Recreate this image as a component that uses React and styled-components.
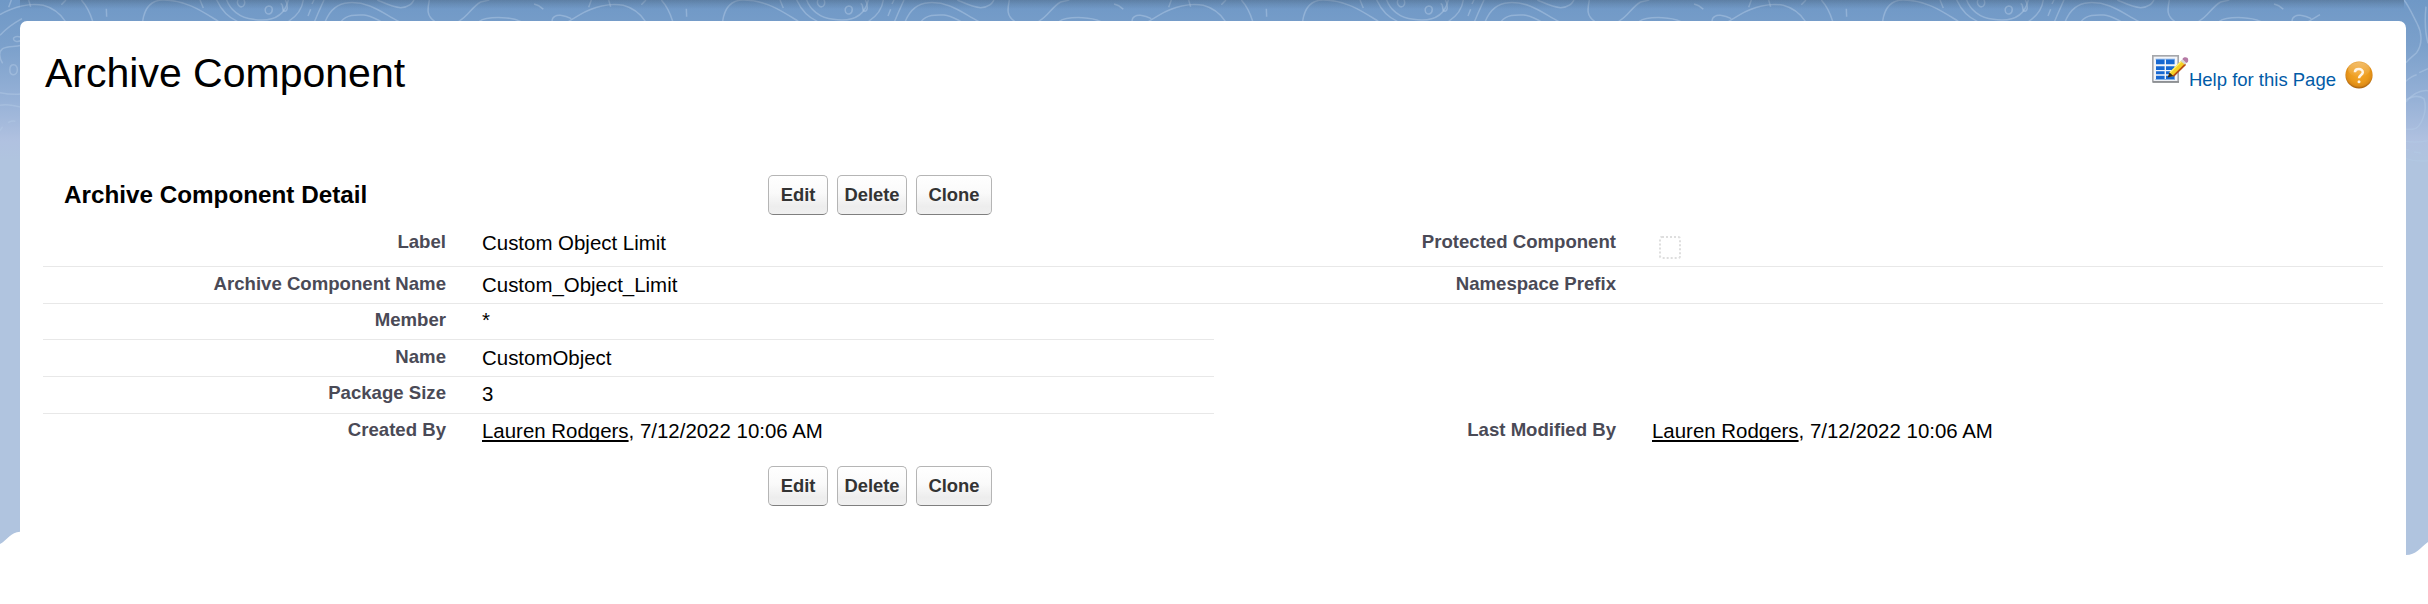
import React from 'react';
import styled, { createGlobalStyle } from 'styled-components';

const GlobalStyle = createGlobalStyle`
  * { box-sizing: border-box; }
  body { margin: 0; background: #fff; font-family: "Liberation Sans", Arial, sans-serif; color: #000; }
`;

const Page = styled.div`
  position: relative;
  height: 604px;
  overflow: hidden;
  padding: 21px 22px 0 20px;
`;

const Backdrop = styled.svg`
  position: absolute;
  inset: 0;
  display: block;
`;

const Card = styled.main`
  position: relative;
  height: 583px;
  background: #fff;
  border-radius: 7px 7px 0 0;
  padding: 0 23px;
`;

const Header = styled.header`
  display: flex;
  justify-content: space-between;
  align-items: flex-start;
  height: 154px;
  padding: 27px 10px 0 2px;
`;

const Title = styled.h1`
  margin: 0;
  font-size: 41px;
  font-weight: 400;
  line-height: 50px;
  white-space: nowrap;
`;

const HelpLinks = styled.div`
  display: flex;
  align-items: flex-start;
  padding-top: 7px;
`;

const HelpLink = styled.a`
  display: flex;
  color: #015ba7;
  font-size: 18.5px;
  line-height: 24px;
  margin: 13px 9px 0 0;
  white-space: nowrap;
`;

const HelpBall = styled.svg`
  margin-top: 6px;
`;

const ActionBar = styled.div`
  display: flex;
  align-items: flex-start;
  height: ${(p) => p.$height}px;
  padding-top: ${(p) => p.$top || 0}px;
`;

const SectionTitle = styled.h2`
  width: 725px;
  margin: 0;
  padding-left: 21px;
  font-size: 24.25px;
  line-height: 40px;
  white-space: nowrap;
`;

const Buttons = styled.div`
  display: flex;
  gap: 9px;
`;

const Button = styled.button`
  width: ${(p) => p.$width}px;
  height: 40px;
  padding: 0 0 1px;
  border: 1px solid #b5b5b5;
  border-bottom-color: #7f7f7f;
  border-radius: 5px;
  background: linear-gradient(#fff 0%, #fafafa 45%, #ededed 80%, #f0f0f0 100%);
  color: #333;
  font: bold 18.4px/24px "Liberation Sans", Arial, sans-serif;
`;

const Details = styled.div`
  width: 2340px;
`;

const Row = styled.div`
  display: grid;
  grid-template-columns: 403px 768px 402px 1fr;
  width: ${(p) => (p.$half ? 1171 : 2340)}px;
  height: ${(p) => p.$height}px;
  border-bottom: 1px solid ${(p) => (p.$last ? 'transparent' : '#e8e8e8')};
`;

const Label = styled.div`
  padding-top: ${(p) => 5 + (p.$shift || 0)}px;
  text-align: right;
  color: #4a4a56;
  font-size: 18.6px;
  font-weight: 700;
  line-height: 24px;
`;

const Value = styled.div`
  padding: ${(p) => 6 + (p.$shift || 0)}px 0 0 36px;
  font-size: 20.44px;
  line-height: 24px;
  white-space: nowrap;
`;

const UserLink = styled.a`
  text-decoration: underline;
  text-decoration-thickness: 2px;
  text-underline-offset: 2px;
  text-decoration-skip-ink: none;
`;

const Checkbox = styled.span`
  display: block;
  width: 22px;
  height: 23px;
  margin: 5px 0 0 7px;
  border: 2px dotted #dedede;
  border-radius: 3px;
`;

const contours = [
  'M0 44 C40 20 90 8 130 16 C160 24 184 46 196 64',
  'M26 22 L34 0 M86 0 L92 20',
  'M184 14 L198 0 M244 0 C262 20 272 44 278 64',
  'M319 26 L320 50',
  'M428 64 C432 36 444 0 490 0 C560 0 610 36 655 64',
  'M600 0 L610 24',
  'M650 0 C664 30 684 52 712 64 M680 0 C690 28 718 54 760 58 C800 64 850 62 865 0',
  'M714 0 C708 12 720 26 730 18 C736 12 734 4 732 0',
  'M806 18 C790 22 794 44 808 42 C820 38 820 18 806 18 Z',
  'M842 10 C854 16 842 34 856 34 C864 30 864 14 856 0',
  'M910 0 C906 30 888 50 866 64',
  'M932 28 L924 48 M942 0 L936 12',
  'M944 64 C956 34 966 14 972 0',
  'M976 64 C988 34 1010 10 1046 8 C1108 4 1146 38 1196 64',
  'M1024 64 C1040 44 1066 44 1092 45 C1112 47 1126 56 1142 64',
  'M1132 0 C1160 12 1180 22 1202 23 C1228 22 1236 10 1242 0',
  'M1288 0 C1282 30 1280 48 1304 64',
  'M1376 64 C1404 50 1414 22 1442 6 L1468 0',
  'M1438 64 C1454 52 1480 52 1508 53 C1532 54 1548 58 1562 64',
  'M1602 12 C1614 14 1624 22 1630 28',
  'M1656 64 C1656 50 1670 44 1682 46 C1696 48 1706 52 1714 56',
  'M1706 64 L1740 44',
];

const leftContours = [
  'M0 106 C24 80 44 68 66 56',
  'M64 112 C40 104 34 120 48 124 C56 126 62 122 66 120',
  'M8 190 C-4 170 -2 154 8 146 C26 136 42 142 64 136',
  'M41 194 C26 194 26 222 39 224 C56 226 56 194 41 194 Z',
  'M0 278 C20 282 40 284 64 282',
  'M0 316 C18 312 42 316 64 322',
  'M0 392 L8 380 M24 368 C32 364 38 360 46 364',
];

const rightContours = [
  'M7212 0 C7228 20 7240 50 7252 72 C7264 94 7270 130 7250 158 C7240 168 7228 176 7218 188',
  'M7278 20 C7274 60 7276 100 7284 130',
  'M7218 244 C7230 232 7242 226 7250 224 M7258 218 L7284 206',
  'M7218 306 C7240 280 7264 270 7284 272',
  'M7218 300 C7240 286 7260 288 7272 296 C7284 330 7264 386 7238 388 L7218 388',
  'M7218 424 C7240 428 7264 426 7284 422',
  'M7218 448 L7226 450 M7242 456 L7264 460',
  'M7218 476 C7240 484 7264 484 7284 482',
];

function PatternBackdrop() {
  return (
    <Backdrop width="2428" height="604" viewBox="0 0 2428 604" aria-hidden="true">
      <defs>
        <linearGradient id="sky" x1="0" y1="0" x2="0" y2="1">
          <stop offset="0" stopColor="#6f98c6" />
          <stop offset=".28" stopColor="#7ba0cb" />
          <stop offset=".6" stopColor="#94b0d6" />
          <stop offset=".88" stopColor="#b0c1e0" />
          <stop offset="1" stopColor="#b0c4df" />
        </linearGradient>
        <linearGradient id="shade" x1="0" y1="0" x2="0" y2="1">
          <stop offset="0" stopColor="#3e5369" stopOpacity=".36" />
          <stop offset=".5" stopColor="#3e5369" stopOpacity=".16" />
          <stop offset="1" stopColor="#3e5369" stopOpacity="0" />
        </linearGradient>
        <g id="tile">
          {contours.map((d) => <path key={d} d={d} />)}
        </g>
      </defs>
      <path d="M0 0H2428V542C2420 548 2416 555 2406 555H2300V531.7H20C11 532 7 540 0 544Z" fill="#b0c4df" />
      <rect width="2428" height="160" fill="url(#sky)" />
      <g transform="scale(.33333)" fill="none" stroke="#b4cbe6" strokeOpacity=".48" strokeWidth="4.5">
        {[0, 1, 2, 3].map((n) => <use key={n} href="#tile" x={n * 1740} />)}
        {leftContours.concat(rightContours).map((d) => <path key={d} d={d} />)}
      </g>
      <rect x="20" width="2384" height="9" fill="url(#shade)" />
    </Backdrop>
  );
}

function EditPageIcon() {
  return (
    <svg width="37" height="28" viewBox="0 0 37 28" aria-hidden="true">
      <rect x=".8" y=".8" width="25.4" height="26" fill="#f3f5f9" stroke="#a5a7ab" strokeWidth="1.7" />
      <path d="M1 27H27" stroke="#85878a" strokeWidth="1.4" />
      <g fill="#1768d1">
        <path d="M4 4.2h8.6v5H4zM14 4.2h8.6v5H14zM4 11.3h8.6v3.6H4zM14 11.3h8.6v3.6H14zM4 16.3h8.6v3H4zM14 16.3h8.6v3H14zM4 20.8h8.6V24H4zM14 20.8h8.6V24H14z" />
      </g>
      <path d="M3.5 4.2H23M3.5 24.5H23" stroke="#6ba3e6" strokeWidth=".8" />
      <path d="M16 22L18 17L29.5 5.5L34 9.5L22 21Z" fill="#f6cf24" />
      <path d="M20.5 20.8L33 8.6L34 10L22 21.8Z" fill="#b64a16" />
      <path d="M17.6 18L29.5 6.2" stroke="#fff06d" strokeWidth="1.2" />
      <path d="M28.5 6L30.5 4.2L34.5 8L33 9.8Z" fill="#d5d5d2" />
      <path d="M30.5 4.2C31 1.8 36 1.5 36.2 4.7C36.5 6.6 35.6 7.5 34.4 8Z" fill="#b579a5" />
      <path d="M15.6 22.5L17.5 17.5L21.4 21Z" fill="#332919" />
    </svg>
  );
}

function HelpIcon() {
  return (
    <HelpBall width="28" height="28" viewBox="0 0 28 28" aria-hidden="true">
      <defs>
        <radialGradient id="amber" cx="50%" cy="42%" r="56%">
          <stop offset="0" stopColor="#f6a72b" />
          <stop offset=".65" stopColor="#eb9a1b" />
          <stop offset=".87" stopColor="#dd8b17" />
          <stop offset="1" stopColor="#a9630f" />
        </radialGradient>
        <linearGradient id="gloss" x1="0" y1="0" x2="0" y2="1">
          <stop offset="0" stopColor="#fff" stopOpacity=".35" />
          <stop offset="1" stopColor="#fff" stopOpacity="0" />
        </linearGradient>
      </defs>
      <circle cx="14" cy="14" r="13.6" fill="url(#amber)" />
      <ellipse cx="14" cy="8.5" rx="11" ry="7.6" fill="url(#gloss)" />
      <path d="M9.9 11.2C10 7 18 7 17.8 11.4C17.7 14 14 14 14 17.2" fill="none" stroke="#fff5e6" strokeWidth="2.5" />
      <circle cx="14" cy="20.7" r="1.5" fill="#fff5e6" />
    </HelpBall>
  );
}

function ActionButtons() {
  return (
    <Buttons>
      <Button $width={60}>Edit</Button>
      <Button $width={70}>Delete</Button>
      <Button $width={76}>Clone</Button>
    </Buttons>
  );
}

function UserStamp() {
  return <><UserLink>Lauren Rodgers</UserLink>, 7/12/2022 10:06 AM</>;
}

export default function App() {
  return (
    <>
      <GlobalStyle />
      <Page>
        <PatternBackdrop />
        <Card>
          <Header>
            <Title>Archive Component</Title>
            <HelpLinks>
              <EditPageIcon />
              <HelpLink>Help for this Page</HelpLink>
              <HelpIcon />
            </HelpLinks>
          </Header>
          <ActionBar $height={50}>
            <SectionTitle>Archive Component Detail</SectionTitle>
            <ActionButtons />
          </ActionBar>
          <Details>
            <Row $height={42}>
              <Label>Label</Label>
              <Value>Custom Object Limit</Value>
              <Label>Protected Component</Label>
              <Value><Checkbox /></Value>
            </Row>
            <Row $height={37}>
              <Label>Archive Component Name</Label>
              <Value>Custom_Object_Limit</Value>
              <Label>Namespace Prefix</Label>
              <Value />
            </Row>
            <Row $height={36} $half>
              <Label $shift={-1}>Member</Label>
              <Value $shift={-2}>*</Value>
            </Row>
            <Row $height={37} $half>
              <Label>Name</Label>
              <Value>CustomObject</Value>
            </Row>
            <Row $height={37} $half>
              <Label $shift={-1}>Package Size</Label>
              <Value $shift={-1}>3</Value>
            </Row>
            <Row $height={38} $last>
              <Label $shift={-1}>Created By</Label>
              <Value $shift={-1}><UserStamp /></Value>
              <Label $shift={-1}>Last Modified By</Label>
              <Value $shift={-1}><UserStamp /></Value>
            </Row>
          </Details>
          <ActionBar $height={54} $top={14}>
            <SectionTitle as="div" />
            <ActionButtons />
          </ActionBar>
        </Card>
      </Page>
    </>
  );
}
